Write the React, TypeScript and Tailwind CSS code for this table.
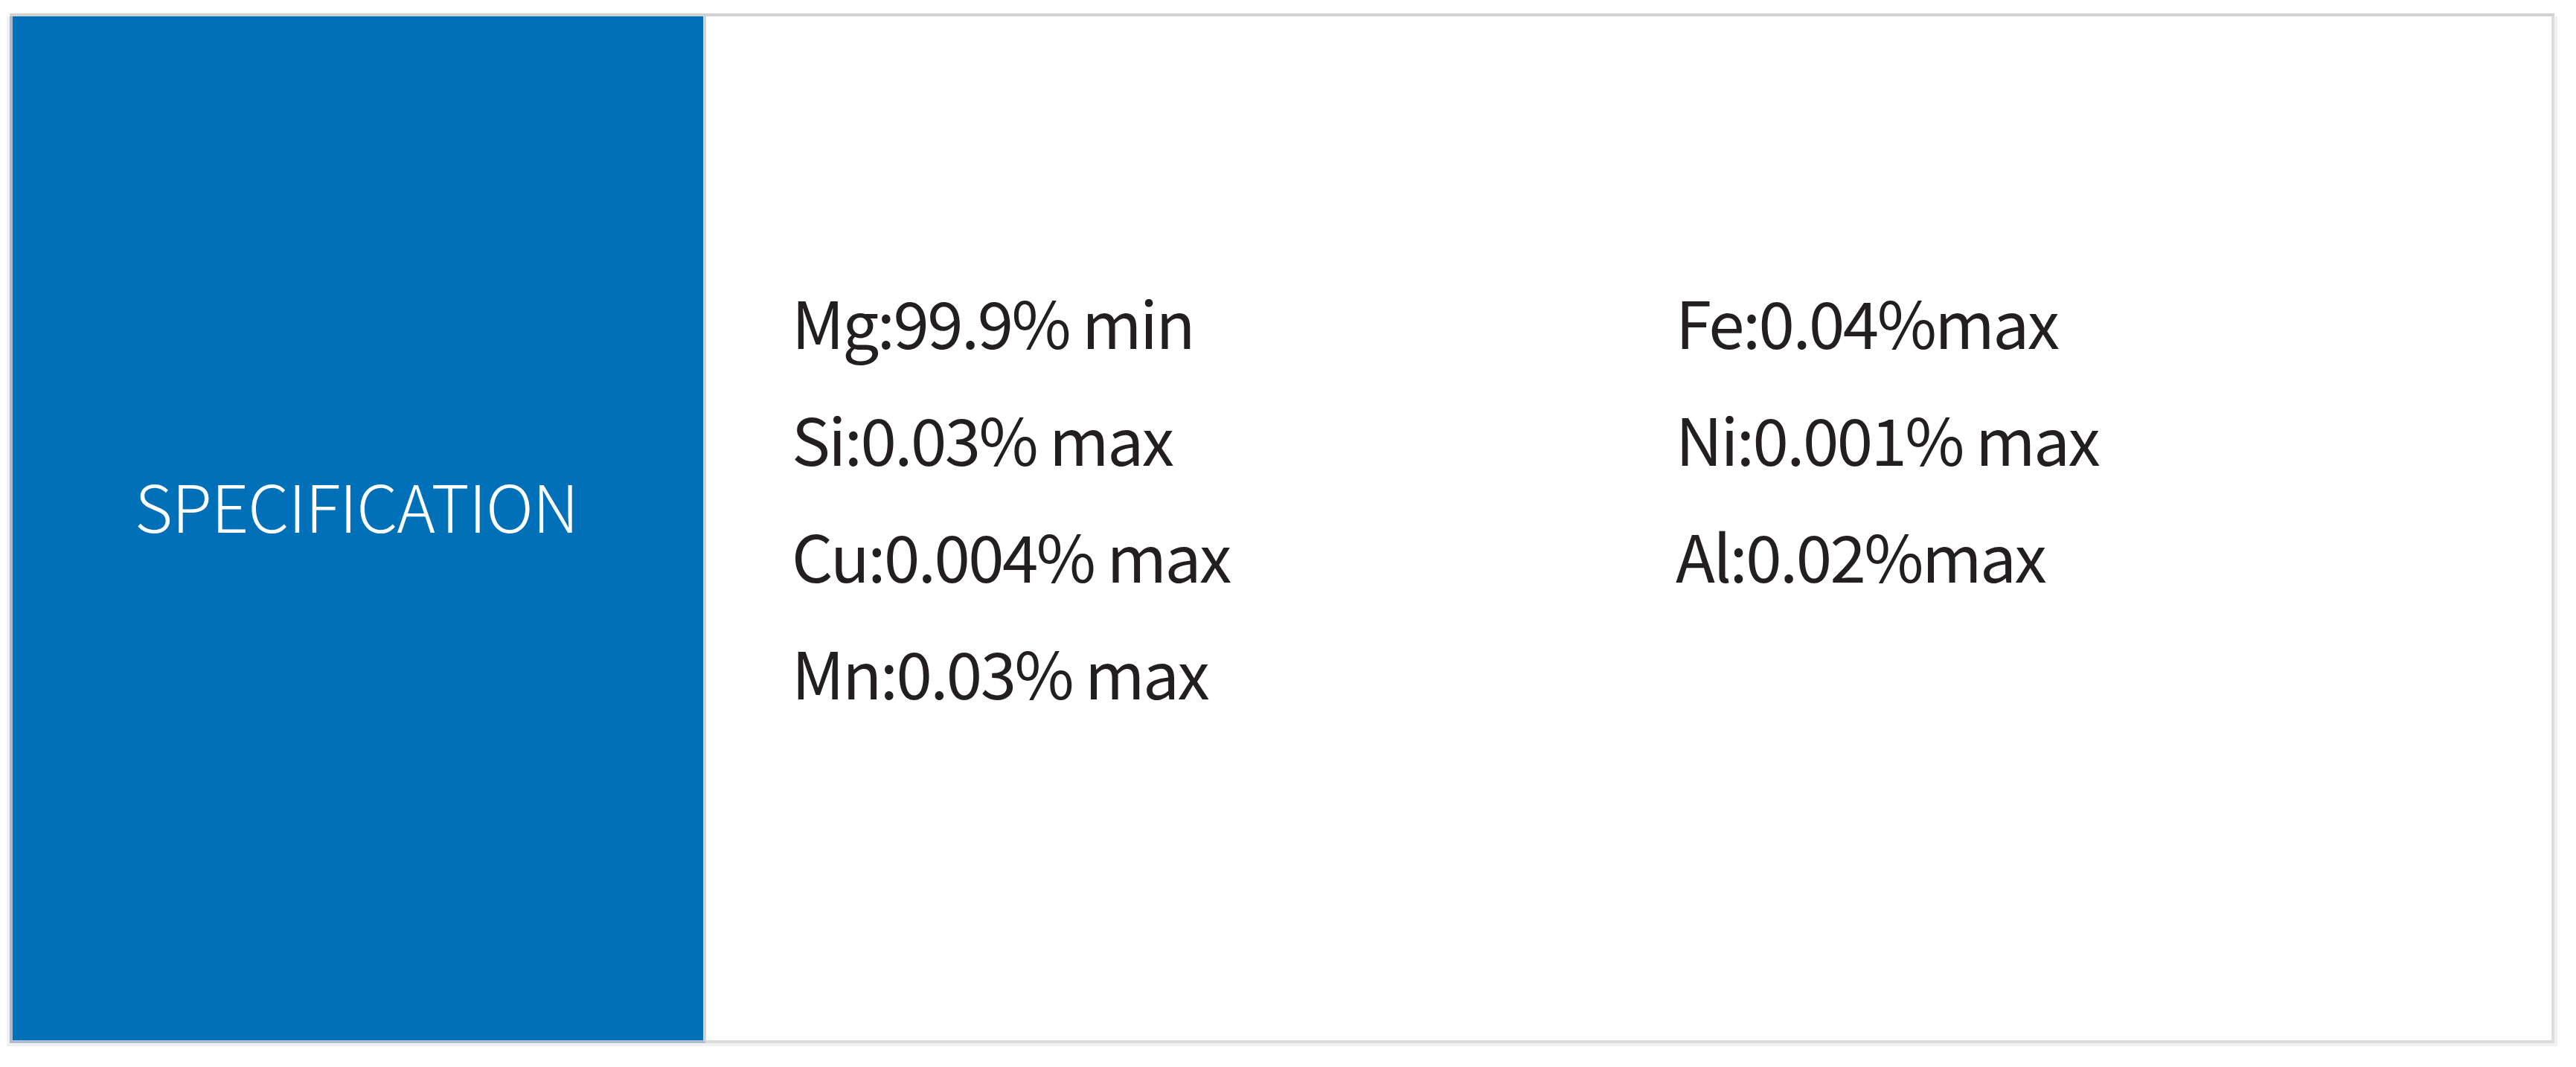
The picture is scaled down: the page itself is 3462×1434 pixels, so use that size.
import React from "react";

const left = ["Mg:99.9% min", "Si:0.03% max", "Cu:0.004% max", "Mn:0.03% max"];
const right = ["Fe:0.04%max", "Ni:0.001% max", "Al:0.02%max"];

export default function App() {
  return (
    <div
      className="w-[3462px] h-[1434px] bg-white pt-[18px] pl-[13px]"
      style={{ fontFamily: '"Noto Sans CJK SC", "Noto Sans", sans-serif' }}
    >
      <div className="flex w-[3420px] border-t-4 border-t-[#d1d1d1] shadow-[4px_4px_0_#f1f1f3,-4px_4px_0_#f1f1f3]">
        <div className="w-[936px] h-[1380px] shrink-0 bg-[#0070b9] border-l-4 border-b-4 border-r-4 border-l-[#aab9cf] border-b-[#aebdd2] border-r-[#d3d3d3] flex items-center pl-[164px] pb-[64px]">
          <span className="text-white text-[88px] font-light leading-none tracking-[-1px]">SPECIFICATION</span>
        </div>
        <div className="flex-1 h-[1380px] border-r-4 border-b-4 border-r-[#dddddd] border-b-[#dcdcdc] pl-[115px] pt-[331px]">
          <div className="grid grid-cols-[1188px_auto] text-[87px] leading-[157px] tracking-[-2.5px] text-[#231f20]">
            <div className="flex flex-col">
              {left.map((t) => (
                <div key={t}>{t}</div>
              ))}
            </div>
            <div className="flex flex-col">
              {right.map((t) => (
                <div key={t}>{t}</div>
              ))}
            </div>
          </div>
        </div>
      </div>
    </div>
  );
}
